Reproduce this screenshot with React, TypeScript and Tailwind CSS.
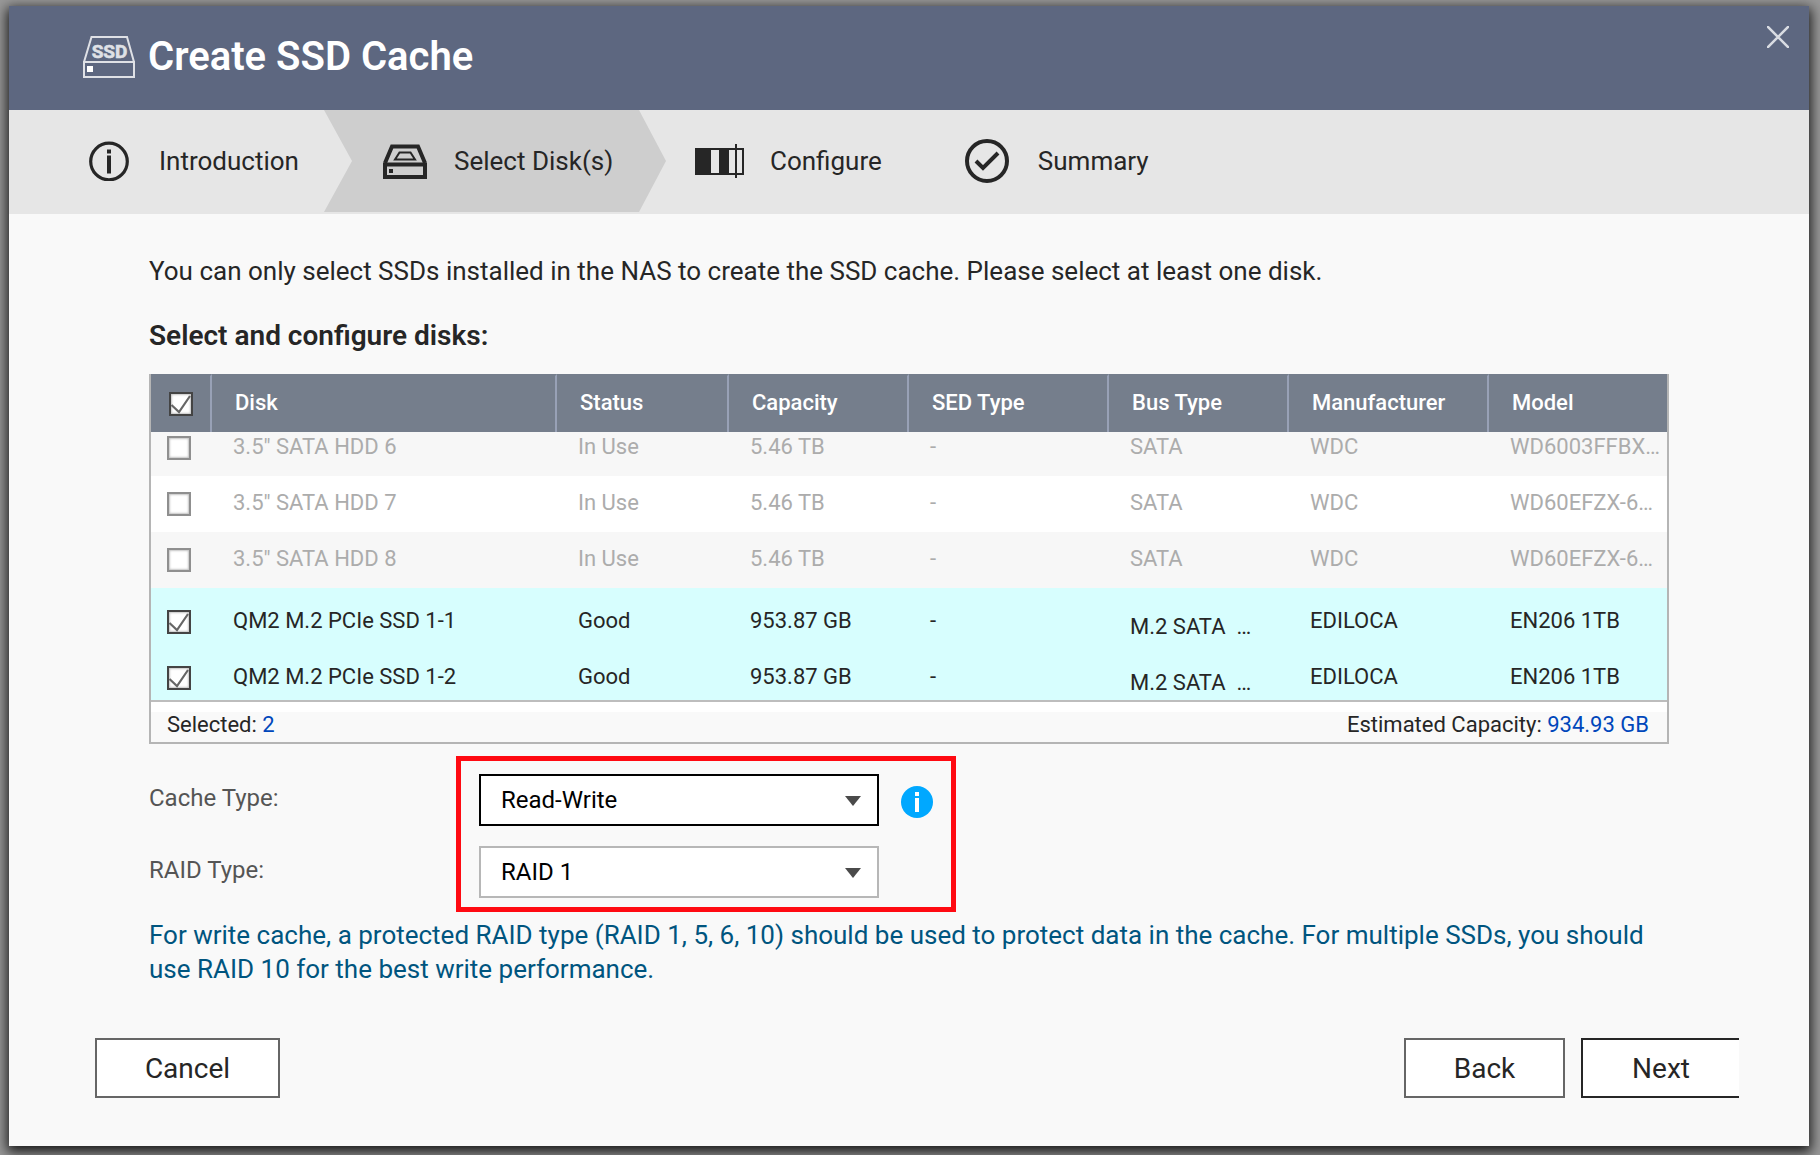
import React, { useState } from "react";
import clsx from "clsx";

interface Disk {
  name: string;
  status: string;
  capacity: string;
  sedType: string;
  busType: string;
  manufacturer: string;
  model: string;
  available: boolean;
}

const DISKS: Disk[] = [
  { name: '3.5" SATA HDD 6', status: "In Use", capacity: "5.46 TB", sedType: "-", busType: "SATA", manufacturer: "WDC", model: "WD6003FFBX…", available: false },
  { name: '3.5" SATA HDD 7', status: "In Use", capacity: "5.46 TB", sedType: "-", busType: "SATA", manufacturer: "WDC", model: "WD60EFZX-6…", available: false },
  { name: '3.5" SATA HDD 8', status: "In Use", capacity: "5.46 TB", sedType: "-", busType: "SATA", manufacturer: "WDC", model: "WD60EFZX-6…", available: false },
  { name: "QM2 M.2 PCIe SSD 1-1", status: "Good", capacity: "953.87 GB", sedType: "-", busType: "M.2 SATA\u00a0 …", manufacturer: "EDILOCA", model: "EN206 1TB", available: true },
  { name: "QM2 M.2 PCIe SSD 1-2", status: "Good", capacity: "953.87 GB", sedType: "-", busType: "M.2 SATA\u00a0 …", manufacturer: "EDILOCA", model: "EN206 1TB", available: true },
];

const COLUMNS = ["Disk", "Status", "Capacity", "SED Type", "Bus Type", "Manufacturer", "Model"];

const SsdIcon = () => (
  <svg width="54" height="44" viewBox="0 0 54 44" fill="none" stroke="#dfe1e6" strokeWidth="2" aria-hidden="true">
    <path d="M2 27 9.500 2H45L52 27M2 27V42H52V27Z" />
    <rect x="5" y="31" width="6" height="6" fill="#fff" stroke="none" />
    <text x="27.500" y="23" textAnchor="middle" fill="#dfe1e6" strokeWidth="0.600" fontFamily="Roboto, sans-serif" fontWeight="700" fontSize="19">
      SSD
    </text>
  </svg>
);

const InfoStepIcon = () => (
  <svg width="40" height="40" viewBox="0 0 40 40" fill="none" aria-hidden="true">
    <circle cx="20" cy="20.500" r="18.300" stroke="#262626" strokeWidth="3.200" />
    <path d="M18 8.500h4v4h-4zM18 14.500h4v18h-4z" fill="#262626" />
  </svg>
);

const DiskStepIcon = () => (
  <svg width="44" height="36" viewBox="0 0 44 36" fill="none" stroke="#262626" aria-hidden="true">
    <path d="M2 20 9 3.500H35L42 20" strokeWidth="4" />
    <path d="M2 21.500H42V34H2Z" strokeWidth="4" />
    <path d="M16.500 9.500H27.500L32 16.500H12Z" strokeWidth="2" />
    <rect x="6" y="26" width="4" height="4" fill="#262626" stroke="none" />
  </svg>
);

const ConfigureStepIcon = () => (
  <svg width="49" height="34" viewBox="0 0 49 34" fill="none" stroke="#262626" aria-hidden="true">
    <rect x="1" y="5" width="47" height="25" strokeWidth="2" />
    <path d="M1 5h15v25H1zM24 5h10v25H24z" fill="#262626" stroke="none" />
    <path d="M41 0V34" strokeWidth="2" />
  </svg>
);

const SummaryStepIcon = () => (
  <svg width="46" height="46" viewBox="0 0 46 46" fill="none" stroke="#262626" strokeWidth="4" aria-hidden="true">
    <circle cx="23" cy="23" r="20" />
    <path d="M12 23 19 30 34 15" />
  </svg>
);

interface CheckboxProps {
  label: string;
  checked: boolean;
  disabled?: boolean;
  onChange: () => void;
}

const Checkbox: React.FC<CheckboxProps> = ({ label, checked, disabled, onChange }) => (
  <span className="relative block size-6">
    <input
      type="checkbox"
      aria-label={label}
      checked={checked}
      disabled={disabled}
      onChange={onChange}
      className={clsx(
        "block size-6 appearance-none border-2 bg-white shadow-[inset_0_0_2px_1px_#c4c4c4]",
        checked ? "border-[#444444]" : "border-[#8f8f8f]"
      )}
    />
    {checked && (
      <svg className="pointer-events-none absolute inset-0" width="24" height="24" viewBox="0 0 24 24" fill="none" stroke="#666" strokeWidth="2.200" aria-hidden="true">
        <path d="M2.500 13 10 20 21 4" />
      </svg>
    )}
  </span>
);

interface SelectProps {
  id: string;
  value: string;
  options: string[];
  active?: boolean;
  onChange: (value: string) => void;
}

const Select: React.FC<SelectProps> = ({ id, value, options, active, onChange }) => (
  <div className="relative w-[400px]">
    <select
      id={id}
      value={value}
      onChange={(e) => onChange(e.target.value)}
      className={clsx(
        "block h-[52px] w-full appearance-none border-2 bg-white pl-5 pr-12 text-2xl leading-6 text-black outline-none",
        active ? "border-black" : "border-[#b7b7b7]"
      )}
    >
      {options.map((option) => (
        <option key={option}>{option}</option>
      ))}
    </select>
    <svg className="pointer-events-none absolute right-[18px] top-[22px]" width="16" height="10" viewBox="0 0 16 10" aria-hidden="true">
      <path d="M0 0H16L8 10Z" fill="#4a4a4a" />
    </svg>
  </div>
);

const App: React.FC = () => {
  const [selected, setSelected] = useState<string[]>(["QM2 M.2 PCIe SSD 1-1", "QM2 M.2 PCIe SSD 1-2"]);
  const [cacheType, setCacheType] = useState("Read-Write");
  const [raidType, setRaidType] = useState("RAID 1");

  const available = DISKS.filter((disk) => disk.available).map((disk) => disk.name);
  const allSelected = selected.length === available.length;

  const toggleDisk = (name: string) => {
    setSelected(selected.includes(name) ? selected.filter((item) => item !== name) : [...selected, name]);
  };

  return (
    <div className="flex min-h-screen flex-col bg-[#999999] pt-[6px] pr-[11px] pb-[9px] pl-[9px] font-[Roboto,sans-serif] text-[#262626]">
      <main className="flex flex-1 flex-col bg-[#f9f9f9] shadow-[0_4px_12px_2px_rgba(0,0,0,0.85)]">
        <header className="flex h-[104px] items-start justify-between bg-[#5d6780] pr-5 pl-[73px]">
          <div className="flex items-center gap-3 pt-[27px]">
            <SsdIcon />
            <h1 className="text-[40px] leading-12 font-semibold text-white">Create SSD Cache</h1>
          </div>
          <button type="button" aria-label="Close" className="mt-5">
            <svg width="22" height="22" viewBox="0 0 22 22" stroke="#d9dce2" strokeWidth="2.600" aria-hidden="true">
              <path d="M0 0 22 22M22 0 0 22" />
            </svg>
          </button>
        </header>

        <nav className="bg-[#e6e6e6]">
          <ol className="flex h-[104px] pb-[2px] text-[26px] leading-8">
            <li className="flex w-[315px] items-center gap-[30px] pl-20">
              <InfoStepIcon />
              Introduction
            </li>
            <li
              aria-current="step"
              className="flex w-[342px] items-center gap-[27px] bg-[#cecece] pl-[59px] [clip-path:polygon(0_0,calc(100%-27px)_0,100%_50%,calc(100%-27px)_100%,0_100%,28px_50%)]"
            >
              <DiskStepIcon />
              Select Disk(s)
            </li>
            <li className="flex items-center gap-[26px] pl-[29px]">
              <ConfigureStepIcon />
              Configure
            </li>
            <li className="flex items-center gap-7 pl-[82px]">
              <SummaryStepIcon />
              Summary
            </li>
          </ol>
        </nav>

        <section className="px-[140px] pt-10">
          <p className="text-[26px] leading-[34px]">
            You can only select SSDs installed in the NAS to create the SSD cache. Please select at least one disk.
          </p>
          <h2 className="mt-[31px] text-[28px] leading-[34px] font-semibold">Select and configure disks:</h2>

          <div className="mt-[21px] border-x-2 border-b-2 border-[#b5b5b5]">
            <table className="w-full table-fixed border-separate border-spacing-0 text-left text-[22px] leading-6 whitespace-nowrap">
              <colgroup>
                <col className="w-[61px]" />
                <col />
                <col className="w-[172px]" />
                <col className="w-[180px]" />
                <col className="w-[200px]" />
                <col className="w-[180px]" />
                <col className="w-[200px]" />
                <col className="w-[178px]" />
              </colgroup>
              <thead className="bg-[#757e8c] text-white">
                <tr className="h-[58px]">
                  <th className="border-t-2 border-r-2 border-t-[#757e8c] border-r-[#98a1b6] pl-[18px]">
                    <Checkbox
                      label="Select all disks"
                      checked={allSelected}
                      onChange={() => setSelected(allSelected ? [] : available)}
                    />
                  </th>
                  {COLUMNS.map((column) => (
                    <th
                      key={column}
                      scope="col"
                      className="border-t-2 border-r-2 border-t-[#757e8c] border-r-[#98a1b6] pb-[2px] pl-[23px] font-medium last:border-r-0"
                    >
                      {column}
                    </th>
                  ))}
                </tr>
              </thead>
              <tbody>
                {DISKS.map((disk, index) => {
                  const cell = clsx("pl-[21px]", disk.available ? "pb-[11px]" : "pb-[17px]");
                  return (
                    <tr
                      key={disk.name}
                      className={clsx(
                        "align-bottom",
                        index === 0 ? "h-11" : "h-14",
                        !disk.available && "text-[#acacac]",
                        selected.includes(disk.name) ? "bg-[#d7fefe]" : index % 2 === 0 ? "bg-[#f7f7f7]" : "bg-white"
                      )}
                    >
                      <td className={clsx("pl-4", disk.available ? "pb-[10px]" : "pb-4")}>
                        <Checkbox
                          label={`Select ${disk.name}`}
                          checked={selected.includes(disk.name)}
                          disabled={!disk.available}
                          onChange={() => toggleDisk(disk.name)}
                        />
                      </td>
                      <td className={cell}>{disk.name}</td>
                      <td className={cell}>{disk.status}</td>
                      <td className={cell}>{disk.capacity}</td>
                      <td className={cell}>{disk.sedType}</td>
                      <td className={clsx("pl-[21px]", disk.available ? "pb-[5px]" : "pb-[17px]")}>{disk.busType}</td>
                      <td className={cell}>{disk.manufacturer}</td>
                      <td className={cell}>{disk.model}</td>
                    </tr>
                  );
                })}
              </tbody>
            </table>
            <div className="border-t-2 border-[#bdbdbd]">
              <div className="h-[10px] bg-white" />
              <div className="flex h-[30px] justify-between pt-px pr-[18px] pl-4 text-[22px] leading-6">
                <span>
                  Selected: <span className="text-[#0047bb]">{selected.length}</span>
                </span>
                <span>
                  Estimated Capacity: <span className="text-[#0047bb]">934.93 GB</span>
                </span>
              </div>
            </div>
          </div>

          <div className="mt-3 flex">
            <div className="flex w-[307px] flex-col gap-5 pt-4 text-2xl text-[#555555]">
              <label htmlFor="cache-type" className="flex h-[52px] items-center">
                Cache Type:
              </label>
              <label htmlFor="raid-type" className="flex h-[52px] items-center">
                RAID Type:
              </label>
            </div>
            <div className="flex flex-col gap-5 border-[5px] border-[#ff0a12] px-[18px] pt-[13px] pb-[9px]">
              <div className="flex items-center gap-[22px]">
                <Select
                  id="cache-type"
                  value={cacheType}
                  options={["Read-Write", "Read-Only", "Write-Only"]}
                  active
                  onChange={setCacheType}
                />
                <button type="button" aria-label="About cache types" className="pt-1">
                  <svg width="32" height="32" viewBox="0 0 32 32" aria-hidden="true">
                    <circle cx="16" cy="16" r="16" fill="#00a8ff" />
                    <path d="M14 6h4v4h-4zM14 12h4v14h-4z" fill="#fff" />
                  </svg>
                </button>
              </div>
              <Select
                id="raid-type"
                value={raidType}
                options={["RAID 0", "RAID 1"]}
                onChange={setRaidType}
              />
            </div>
          </div>

          <p className="mt-[6px] text-[26px] leading-[34px] text-[#00557f]">
            For write cache, a protected RAID type (RAID 1, 5, 6, 10) should be used to protect data in the cache. For
            multiple SSDs, you should use RAID 10 for the best write performance.
          </p>
        </section>

        <footer className="mt-auto flex gap-4 pt-10 pr-[70px] pb-12 pl-[86px] text-[28px]">
          <button type="button" className="mr-auto h-[60px] w-[185px] border-2 border-[#666666] bg-white pt-[2px]">
            Cancel
          </button>
          <button type="button" className="h-[60px] w-[161px] border-2 border-[#666666] bg-white pt-[2px]">
            Back
          </button>
          <button type="button" className="h-[60px] w-[158px] border-2 border-r-0 border-[#262626] bg-white pt-[2px]">
            Next
          </button>
        </footer>
      </main>
    </div>
  );
};

export default App;
